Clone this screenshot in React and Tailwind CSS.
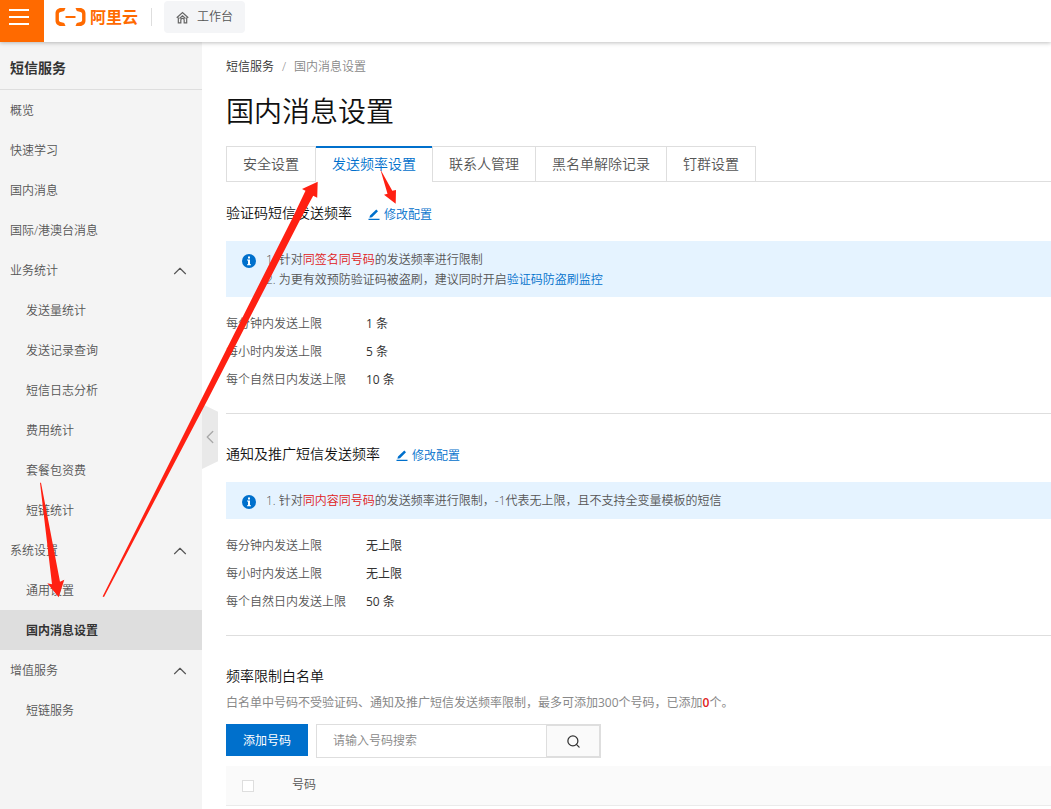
import React, { useState } from 'react';
import { ChevronUp, ChevronLeft, Search } from 'lucide-react';

const menu = [
    { label: '概览' },
    { label: '快速学习' },
    { label: '国内消息' },
    { label: '国际/港澳台消息' },
    { label: '业务统计', children: ['发送量统计', '发送记录查询', '短信日志分析', '费用统计', '套餐包资费', '短链统计'] },
    { label: '系统设置', children: ['通用设置', '国内消息设置'] },
    { label: '增值服务', children: ['短链服务'] },
];

const tabs = ['安全设置', '发送频率设置', '联系人管理', '黑名单解除记录', '钉群设置'];

const Header = () => (
    <header className="relative z-10 flex h-[42px] bg-white shadow-[0_1px_4px_rgba(0,0,0,0.25)]">
        <button aria-label="菜单" className="flex w-11 flex-col justify-center gap-[5px] bg-[#ff6a00] pb-2 pl-[9px]">
            <span className="h-0.5 w-5 bg-white" />
            <span className="h-0.5 w-5 bg-white" />
            <span className="h-0.5 w-5 bg-white" />
        </button>
        <a href="#" className="flex h-[34px] items-center gap-1 pl-[11px] text-base font-bold text-[#ff6a00]">
            <svg width="31" height="20" viewBox="0 0 31 20" fill="#ff6a00" aria-hidden="true">
                <path d="M10.500 1H6C2.800 1 .5 3.300 .5 6.500v7c0 3.200 2.300 5.500 5.500 5.500h4.500l-1.300-3-3.700-.9c-1-.3-1.600-1-1.600-2V6.900c0-1 .6-1.700 1.600-2l3.700-.9z" />
                <path d="M20.500 1H25c3.200 0 5.500 2.300 5.500 5.500v7c0 3.200-2.300 5.500-5.500 5.500h-4.500l1.300-3 3.700-.9c1-.3 1.600-1 1.600-2V6.900c0-1-.6-1.700-1.600-2l-3.700-.9z" />
                <path d="M10.500 9h10v2h-10z" />
            </svg>
            阿里云
        </a>
        <span className="mt-2 ml-[13px] h-[18px] w-px bg-[#dedede]" />
        <a href="#" className="mt-px ml-3 flex h-8 items-center gap-2 rounded-sm bg-[#f4f5f7] px-3 text-xs text-[#555]">
            <svg width="13" height="13" viewBox="0 0 14 14" fill="none" stroke="#666" strokeWidth="1.300" aria-hidden="true">
                <path d="M.8 7.200L7 1.600l6.200 5.600M2.500 7v5.700h2.700V9.800a1.800 1.800 0 0 1 3.600 0v2.900h2.700V7M3.800 8L7 5.200 10.200 8" />
            </svg>
            工作台
        </a>
    </header>
);

const Sidebar = () => (
    <aside className="w-[202px] shrink-0 bg-[#f4f4f4] text-xs text-[#555]">
        <h2 className="h-12 border-b border-[#dedede] pt-1 pl-[10px] text-sm leading-[44px] font-bold text-[#333]">短信服务</h2>
        <nav>
            {menu.map((item) => (
                <div key={item.label}>
                    {item.children ? (
                        <button className="flex h-10 w-full items-center justify-between pt-0.5 pr-[11px] pl-[10px]">
                            {item.label}
                            <ChevronUp size={22} strokeWidth={1.25} />
                        </button>
                    ) : (
                        <a href="#" className="flex h-10 items-center pt-0.5 pl-[10px]">{item.label}</a>
                    )}
                    {item.children?.map((child) => (
                        <a
                            key={child}
                            href="#"
                            className={`flex h-10 items-center pt-0.5 pl-[26px] ${child === '国内消息设置' ? 'bg-[#dedede] font-bold text-[#333]' : ''}`}
                        >
                            {child}
                        </a>
                    ))}
                </div>
            ))}
        </nav>
    </aside>
);

const SectionTitle = ({ children }) => (
    <div className="flex h-5 items-center">
        <h3 className="text-sm leading-5 text-[#111]">{children}</h3>
        <a href="#" className="ml-4 flex items-center gap-1 pt-[3px] text-xs text-[#0070cc]">
            <svg width="12" height="12" viewBox="0 0 12 12" fill="#0070cc" aria-hidden="true">
                <path d="M.5 9.800h11V11H.5zM1.400 8.800l.6-2.300L8.300.6l1.700 1.600L4 8.200z" />
            </svg>
            修改配置
        </a>
    </div>
);

const Notice = ({ children }) => (
    <div className="mt-[18px] flex min-h-[37px] gap-[10px] bg-[#e5f3ff] px-4 pt-[9px] pb-[7px] text-xs leading-5 text-[#555]">
        <svg className="mt-1 shrink-0" width="14" height="14" viewBox="0 0 14 14" aria-hidden="true">
            <circle cx="7" cy="7" r="7" fill="#0070cc" />
            <path d="M6 2.500h2v2H6zM5 5.500h3v4.700h1v1H5v-1h1V6.500H5z" fill="#fff" />
        </svg>
        <div>{children}</div>
    </div>
);

const Limits = ({ values }) => (
    <dl className="mt-[13px] grid grid-cols-[140px_1fr] border-b border-[#dedede] pb-[19px] text-xs leading-7">
        {['每分钟内发送上限', '每小时内发送上限', '每个自然日内发送上限'].map((label, i) => (
            <React.Fragment key={label}>
                <dt className="text-[#555]">{label}</dt>
                <dd className="font-normal text-[#333]">{values[i]}</dd>
            </React.Fragment>
        ))}
    </dl>
);

// red arrows pointing out the steps
const Arrows = () => (
    <svg className="pointer-events-none absolute top-0 left-0 z-20" width="450" height="620" viewBox="0 0 450 620" fill="#ff2012" aria-hidden="true">
        <path d="M102.600 596.600L201 400l90.500-180 14-29.300-3.500-1.700 15.700-7.300-.5 16-4-2L300 220l-92.500 180L104 597z" />
        <path d="M380.300 169.300l12 21.400 3.700-.7-.3 13.700-11.700-9 3.500-1z" />
        <path d="M40 482.700L52 584.300l-4.700-1 11.400 14 5.600-17.600-4.300 2L41 482.700z" />
    </svg>
);

export default function App() {
    const [active, setActive] = useState('发送频率设置');
    const [keyword, setKeyword] = useState('');

    return (
        <div className="relative flex min-h-screen flex-col overflow-hidden bg-white font-['Open_Sans','Noto_Sans_CJK_SC',sans-serif] font-[350]">
            <Header />
            <div className="flex flex-1">
                <Sidebar />
                <main className="relative min-w-0 flex-1 pt-[15px] pl-6">
                    <button aria-label="收起" className="absolute top-[362px] left-0 flex h-[65px] w-4 items-center justify-center bg-[#e9e9e9] text-[#aaa] [clip-path:polygon(0_0,100%_12%,100%_88%,0_100%)]">
                        <ChevronLeft size={22} strokeWidth={1.5} className="shrink-0" />
                    </button>

                    <div className="flex gap-2 text-xs leading-5">
                        <a href="#" className="text-[#333]">短信服务</a>
                        <span className="text-[#888]">/</span>
                        <span className="text-[#888]">国内消息设置</span>
                    </div>
                    <h1 className="mt-[14px] text-[28px] leading-10 text-[#111]">国内消息设置</h1>

                    <div role="tablist" className="mt-[15px] flex h-9 text-sm">
                        {tabs.map((tab) => (
                            <button
                                key={tab}
                                role="tab"
                                aria-selected={tab === active}
                                onClick={() => setActive(tab)}
                                className={`border-l border-[#dedede] px-4 last-of-type:border-r ${
                                    tab === active
                                        ? 'text-[#0070cc] shadow-[inset_0_2px_0_#0070cc]'
                                        : 'border-y text-[#555]'
                                }`}
                            >
                                {tab}
                            </button>
                        ))}
                        <span className="flex-1 border-b border-[#dedede]" />
                    </div>

                    <section className="pt-[21px]">
                        <SectionTitle>验证码短信发送频率</SectionTitle>
                        <Notice>
                            <p>1. 针对<span className="text-[#e02020]">同签名同号码</span>的发送频率进行限制</p>
                            <p>2. 为更有效预防验证码被盗刷，建议同时开启<a href="#" className="text-[#0070cc]">验证码防盗刷监控</a></p>
                        </Notice>
                        <Limits values={['1 条', '5 条', '10 条']} />
                    </section>

                    <section className="pt-[30px]">
                        <SectionTitle>通知及推广短信发送频率</SectionTitle>
                        <Notice>
                            <p>1. 针对<span className="text-[#e02020]">同内容同号码</span>的发送频率进行限制，-1代表无上限，且不支持全变量模板的短信</p>
                        </Notice>
                        <Limits values={['无上限', '无上限', '50 条']} />
                    </section>

                    <section className="pt-[30px]">
                        <h3 className="text-sm leading-5 text-[#111]">频率限制白名单</h3>
                        <p className="mt-[7px] text-xs leading-5 font-normal text-[#888]">
                            白名单中号码不受验证码、通知及推广短信发送频率限制，最多可添加300个号码，已添加<span className="font-semibold text-[#e02020]">0</span>个。
                        </p>
                        <div className="mt-[11px] flex items-start gap-2 text-xs">
                            <button className="h-8 border border-[#0070cc] bg-[#0070cc] px-4 pt-0.5 font-normal text-white">添加号码</button>
                            <div className="flex h-[34px] border border-[#dedede]">
                                <input
                                    aria-label="请输入号码搜索"
                                    placeholder="请输入号码搜索"
                                    value={keyword}
                                    onChange={(e) => setKeyword(e.target.value)}
                                    className="w-[229px] px-4 outline-none placeholder:text-[#888]"
                                />
                                <button aria-label="搜索" className="flex w-[54px] items-center justify-center border border-[#dedede] bg-[#fafafa] text-[#333]">
                                    <Search size={15} />
                                </button>
                            </div>
                        </div>
                        <table className="mt-2 w-full text-left text-xs text-[#555]">
                            <thead>
                                <tr className="h-[39px] border-b border-[#ebebeb] bg-[#fafafa]">
                                    <th className="w-[50px] pt-0.5 pl-4">
                                        <input type="checkbox" aria-label="全选" className="block size-3 appearance-none border border-[#dedede] bg-white" />
                                    </th>
                                    <th className="pl-4 font-[350]">号码</th>
                                </tr>
                            </thead>
                        </table>
                    </section>
                </main>
            </div>
            <Arrows />
        </div>
    );
}
